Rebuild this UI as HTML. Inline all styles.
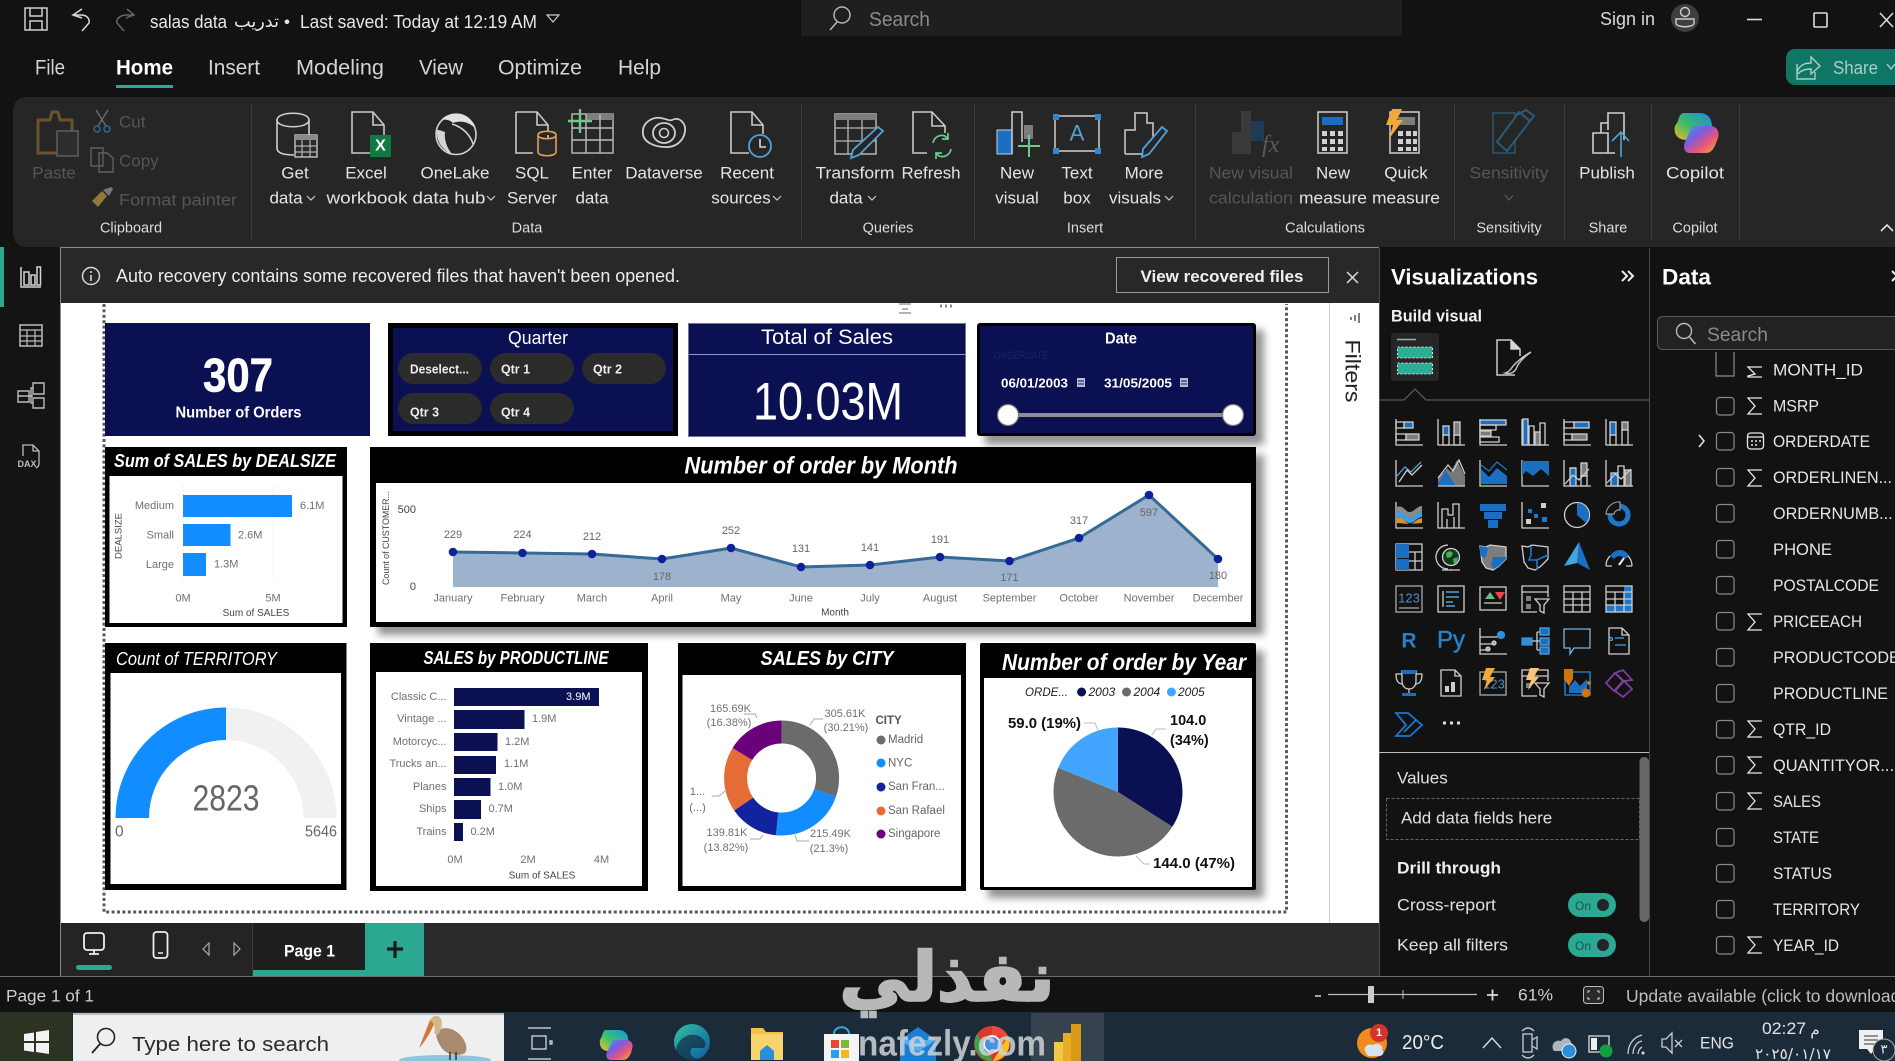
<!DOCTYPE html>
<html lang="en"><head><meta charset="utf-8"><title>Power BI Desktop</title>
<style>
html,body{margin:0;padding:0;background:#121212;width:1895px;height:1061px;overflow:hidden}
svg{display:block;position:absolute;left:0;top:0}
text{font-family:"Liberation Sans","DejaVu Sans",sans-serif;dominant-baseline:central;fill:#e8e8e8}
.m{text-anchor:middle}.e{text-anchor:end}.b{font-weight:700}.i{font-style:italic}
.tab{font-size:21px;fill:#d4d4d4}
.rb{font-size:17px;fill:#e4e4e4;text-anchor:middle}
.rd{font-size:17px;fill:#565656;text-anchor:middle}
.gr{font-size:14.5px;fill:#dcdcdc;text-anchor:middle}
.ax{font-size:11px;fill:#707070}
.dl{font-size:11px;fill:#666}
.f{font-size:16.2px;fill:#e6e6e6}
.v{font-size:17px;fill:#e0e0e0}
.ic{fill:none;stroke:#cfcfcf;stroke-width:1.4}
.bl{fill:#1b6fc2}.gy{fill:#7d7d7d}
.sb{fill:none;stroke:#1b78cc;stroke-width:1.6}
.cb{fill:none;stroke:#8a8a8a;stroke-width:1.2}
</style></head><body>
<svg width="1895" height="1061" viewBox="0 0 1895 1061" xmlns="http://www.w3.org/2000/svg">
<defs>
<filter id="bl" x="-20%" y="-20%" width="140%" height="140%"><feGaussianBlur stdDeviation="4"/></filter>
<linearGradient id="cop" x1="0" y1="0" x2="1" y2="1"><stop offset="0" stop-color="#2aa9f0"/><stop offset=".35" stop-color="#7b5be0"/><stop offset=".65" stop-color="#e8567a"/><stop offset="1" stop-color="#f3b02f"/></linearGradient>
<linearGradient id="cop2" x1="0" y1="1" x2="1" y2="0"><stop offset="0" stop-color="#f6c22a"/><stop offset=".45" stop-color="#3dc46a"/><stop offset="1" stop-color="#1a8fe8"/></linearGradient>
<linearGradient id="edge" x1="0" y1="0" x2="1" y2="1"><stop offset="0" stop-color="#35c1a0"/><stop offset="1" stop-color="#0c59a4"/></linearGradient>
</defs>
<rect width="1895" height="1061" fill="#121212"/>

<!-- title bar -->
<g class="ic" stroke="#d0d0d0">
<path d="M25 8h22v22H25zM30 8v8h12V8M30 30v-9h12v9" fill="none" stroke="#d0d0d0" stroke-width="1.500"/>
<path d="M82 9l-9 6 9 3M73 15h8c6 0 9 4 8 8l-7 8" fill="none" stroke="#d8d8d8" stroke-width="1.500"/>
<path d="M127 9l7 6-8 3M134 15h-7c-7 0-11 4-10 8l7 8" fill="none" stroke="#666" stroke-width="1.500"/>
</g>
<text x="150" y="22" font-size="18" textLength="77" lengthAdjust="spacingAndGlyphs">salas data</text>
<text x="234" y="22" font-size="17" textLength="45" lengthAdjust="spacingAndGlyphs" style="font-family:'DejaVu Sans',sans-serif">تدريب</text>
<text x="287" y="22" font-size="17" class="m">•</text>
<text x="300" y="22" font-size="18" textLength="237" lengthAdjust="spacingAndGlyphs">Last saved: Today at 12:19 AM</text>
<path d="M547 15h12l-6 7z" fill="none" stroke="#ccc" stroke-width="1.200"/>
<rect x="801" width="601" height="36" fill="#1f1f1f"/>
<circle cx="842" cy="15" r="8" fill="none" stroke="#b5b5b5" stroke-width="1.500"/><path d="M837 22l-7 8" stroke="#b5b5b5" stroke-width="1.600"/>
<text x="869" y="20" font-size="20" style="fill:#8a8a8a" textLength="61" lengthAdjust="spacingAndGlyphs">Search</text>
<text x="1600" y="19" font-size="18" style="fill:#d8d8d8" textLength="55" lengthAdjust="spacingAndGlyphs">Sign in</text>
<circle cx="1685" cy="18" r="14" fill="#3e3e3e"/><circle cx="1685" cy="12" r="4.500" fill="none" stroke="#ccc" stroke-width="1.400"/><path d="M1676 19h18v4c0 5-18 5-18 0z" fill="none" stroke="#ccc" stroke-width="1.400"/>
<path d="M1747 19.500h15" stroke="#ddd" stroke-width="1.600"/>
<rect x="1814" y="13" width="13" height="14" fill="none" stroke="#ddd" stroke-width="1.600" rx="1"/>
<path d="M1880 13l13 14M1893 13l-13 14" stroke="#ddd" stroke-width="1.500"/>

<!-- tabs -->
<text x="35" y="68" class="tab" textLength="30" lengthAdjust="spacingAndGlyphs">File</text>
<text x="116" y="68" class="tab" style="fill:#fff;font-weight:700" textLength="57" lengthAdjust="spacingAndGlyphs">Home</text>
<rect x="116" y="85" width="57" height="3" fill="#2ba892"/>
<text x="208" y="68" class="tab" textLength="52" lengthAdjust="spacingAndGlyphs">Insert</text>
<text x="296" y="68" class="tab" textLength="88" lengthAdjust="spacingAndGlyphs">Modeling</text>
<text x="419" y="68" class="tab" textLength="44" lengthAdjust="spacingAndGlyphs">View</text>
<text x="498" y="68" class="tab" textLength="84" lengthAdjust="spacingAndGlyphs">Optimize</text>
<text x="618" y="68" class="tab" textLength="43" lengthAdjust="spacingAndGlyphs">Help</text>
<path d="M1795 49h100v36h-100a9 9 0 0 1-9-9V58a9 9 0 0 1 9-9z" fill="#0f7564"/>
<path d="M1797 64v15h18v-7M1797 72c3-8 9-9 14-9V57l9 9-9 8v-5c-5 0-10 1-13 5" fill="none" stroke="#a9cfc8" stroke-width="1.400"/>
<text x="1833" y="68" font-size="18" style="fill:#a9cfc8" textLength="45" lengthAdjust="spacingAndGlyphs">Share</text>
<path d="M1887 64l4 5 4-5" fill="none" stroke="#a9cfc8" stroke-width="1.400"/>

<!-- ribbon -->
<path d="M26 97H1895V247H26a13 13 0 0 1-13-13V110a13 13 0 0 1 13-13z" fill="#262626"/>
<g stroke="#3a3a3a" stroke-width="1">
<path d="M251.500 104V240M801.500 104V240M974.500 104V240M1195.500 104V240M1454.500 104V240M1564.500 104V240M1651.500 104V240M1739.500 104V240"/>
</g>
<g id="ribbonicons">
<!-- paste -->
<path d="M38 120h12l2-8h6l2 8h12v33H38z" fill="none" stroke="#6a5232" stroke-width="3"/>
<rect x="57" y="131" width="21" height="25" fill="#2d2d2d" stroke="#5a5a5a" stroke-width="1.600"/>
<path d="M96 110l10 16M108 110l-10 16" stroke="#6c6c6c" stroke-width="1.400"/><circle cx="97" cy="129" r="3" fill="none" stroke="#2f6a96" stroke-width="1.500"/><circle cx="107" cy="129" r="3" fill="none" stroke="#2f6a96" stroke-width="1.500"/>
<path d="M91 148h12v18H91zM99 153h8l6 5v14H99z" fill="none" stroke="#606060" stroke-width="1.400"/>
<path d="M92 201l10-10 5 5-9 11z" fill="#8d7a3c"/><path d="M103 190l8-3 2 2-4 7z" fill="#777"/>
<!-- get data -->
<path d="M277 120c0-9 32-9 32 0v22M277 120c0 9 32 9 32 0M277 120v28c0 6 10 7 17 7" fill="none" stroke="#cfcfcf" stroke-width="1.600"/>
<rect x="295" y="135" width="22" height="22" fill="#2a2a2a" stroke="#cfcfcf" stroke-width="1.300"/><rect x="295" y="135" width="22" height="5" fill="#8a8a8a"/><path d="M295 146h22M295 152h22M302 140v17M310 140v17" stroke="#cfcfcf"/>
<!-- excel -->
<path d="M352 112h21l11 13v28h-32zM373 112v13h11" fill="none" stroke="#c9c9c9" stroke-width="1.600"/>
<rect x="370" y="135" width="21" height="22" fill="#107a43"/><text x="380.500" y="146" class="m b" font-size="16" style="fill:#fff">X</text>
<!-- onelake -->
<circle cx="456" cy="134.500" r="20" fill="#262626" stroke="#d0d0d0" stroke-width="1.600"/>
<path d="M441 120c7-8 20-9 28-2 3 3 5 6 6 10-6-6-15-8-22-5-3-3-7-4-12-3z" fill="#e2e2e2"/><path d="M437 130c-1 11 5 20 15 24-5-6-8-14-7-22-3-1-5-2-8-2z" fill="#d4d4d4"/>
<path d="M452 124c10 3 18 10 21 20" fill="none" stroke="#d0d0d0" stroke-width="1.600"/>
<!-- SQL -->
<path d="M516 112h21l11 13v13M537 112v13h11M533 153h-17v-41" fill="none" stroke="#c9c9c9" stroke-width="1.600"/>
<path d="M538 135c0-5 18-5 18 0v17c0 5-18 5-18 0zM538 135c0 5 18 5 18 0" fill="#2a2a2a" stroke="#e0a05a" stroke-width="1.600"/>
<!-- enter data -->
<rect x="572" y="114" width="41" height="39" fill="none" stroke="#bdbdbd" stroke-width="1.400"/><rect x="586" y="113" width="27" height="7" fill="#7d7d7d"/>
<path d="M572 128h41M572 140h41M586 114v39M600 114v39" stroke="#bdbdbd" stroke-width="1.400"/>
<path d="M580 109v24M568 121h24" stroke="#6ecb8a" stroke-width="2.400"/>
<!-- dataverse -->
<path d="M650 120c10-6 18 2 22 0 8-4 14 4 13 11-1 10-10 17-20 16-9 0-21-4-22-13-1-7 2-11 7-14z" fill="none" stroke="#cfcfcf" stroke-width="1.800"/>
<ellipse cx="664" cy="133" rx="11" ry="10" fill="none" stroke="#cfcfcf" stroke-width="1.800"/><circle cx="664" cy="133" r="4.500" fill="none" stroke="#cfcfcf" stroke-width="1.600"/>
<!-- recent -->
<path d="M749 153h-18v-41h21l11 13v9M752 112v13h11" fill="none" stroke="#c9c9c9" stroke-width="1.600"/>
<circle cx="760" cy="146" r="11" fill="#262626" stroke="#4fa3d8" stroke-width="1.800"/><path d="M760 139v8h6" fill="none" stroke="#d8d8d8" stroke-width="1.600"/>
<!-- transform -->
<rect x="835" y="114" width="41" height="40" fill="none" stroke="#b5b5b5" stroke-width="1.500"/><rect x="835" y="114" width="41" height="6" fill="#7d7d7d"/><path d="M835 128h41M835 141h41M848 120v34M862 120v34" stroke="#b5b5b5" stroke-width="1.300"/>
<path d="M878 127l5 4-24 24-8 3 2-8z" fill="#262626" stroke="#4fa3d8" stroke-width="1.800"/>
<!-- refresh -->
<path d="M927 153h-14v-41h19l13 14v7M932 112v14h13" fill="none" stroke="#c9c9c9" stroke-width="1.600"/>
<path d="M933 143c1-6 7-9 12-7l3 3M951 149c-1 6-7 9-12 7l-3-3M948 133v6h-6M936 159v-6h6" fill="none" stroke="#6ecb8a" stroke-width="1.700"/>
<!-- new visual -->
<rect x="997" y="130" width="15" height="24" fill="#1b6fc2" stroke="#cfcfcf"/><path d="M1012 154v-42h10v30" fill="none" stroke="#cfcfcf" stroke-width="1.500"/><rect x="1024" y="125" width="9" height="14" fill="#7d7d7d"/>
<path d="M1029 135v22M1018 146h22" stroke="#6ecb8a" stroke-width="2"/>
<!-- text box -->
<rect x="1055" y="116" width="44" height="35" fill="none" stroke="#cfcfcf" stroke-width="1.500"/>
<path d="M1053 114h6v6h-6zM1095 114h6v6h-6zM1053 148h6v6h-6zM1095 148h6v6h-6z" fill="#2f88cf"/>
<text x="1077" y="133" class="m" font-size="22" style="fill:#4fa3d8">A</text>
<!-- more visuals -->
<path d="M1125 154v-24h10v-17h12v10h6v18M1125 154h22" fill="none" stroke="#cfcfcf" stroke-width="1.500"/>
<path d="M1162 127l5 4-18 23-7 3 1-8z" fill="#262626" stroke="#4fa3d8" stroke-width="1.800"/>
<!-- new visual calc -->
<path d="M1232 154v-22h9v-21h10v43z" fill="#3a3a3a"/><rect x="1251" y="121" width="13" height="20" fill="#1f3a54"/>
<text x="1262" y="145" class="i" font-size="24" style="fill:#5a5a5a;font-family:'Liberation Serif',serif">fx</text>
<!-- new measure -->
<rect x="1318" y="112" width="29" height="41" fill="none" stroke="#cfcfcf" stroke-width="1.500"/><rect x="1322" y="117" width="21" height="8" fill="#1b6fc2"/>
<path d="M1322 131h5v5h-5zM1330 131h5v5h-5zM1338 131h5v5h-5zM1322 139h5v5h-5zM1330 139h5v5h-5zM1338 139h5v5h-5zM1322 147h5v4h-5zM1330 147h5v4h-5zM1338 147h5v4h-5z" fill="#d0d0d0"/>
<!-- quick measure -->
<rect x="1390" y="112" width="29" height="41" fill="none" stroke="#cfcfcf" stroke-width="1.500"/><rect x="1398" y="117" width="17" height="8" fill="#7d7d7d"/>
<path d="M1398 131h5v5h-5zM1406 131h5v5h-5zM1398 139h5v5h-5zM1406 139h5v5h-5zM1398 147h5v4h-5zM1406 147h5v4h-5zM1413 131h4v5h-4zM1413 139h4v5h-4zM1413 147h4v4h-4z" fill="#d0d0d0"/>
<path d="M1392 109h10l-5 11h6l-14 19 4-14h-7z" fill="#f2a83b"/>
<!-- sensitivity -->
<path d="M1493 113h22v40h-22z" fill="none" stroke="#2a4a5c" stroke-width="2"/><path d="M1497 142l22-30 11 9-23 30z" fill="#262626" stroke="#2f5a74" stroke-width="2"/><path d="M1517 115l9-5 8 6-6 7" fill="none" stroke="#2f5a74" stroke-width="2"/>
<!-- publish -->
<path d="M1608 130v-17h16v27M1593 153v-20h15v20zM1608 123h-7v10M1593 153h22" fill="none" stroke="#cfcfcf" stroke-width="1.600"/>
<path d="M1621 157v-24M1612 141l9-9 8 9" fill="none" stroke="#4fa3d8" stroke-width="1.600"/>
<!-- copilot -->
<path d="M1684 113h16c8 0 12 6 12 14l-4 13h-22c-8 0-13-6-11-14l3-5c1-5 3-8 6-8z" fill="url(#cop2)" opacity=".95"/>
<path d="M1692 126h18c7 0 10 6 8 12l-2 5c-2 6-5 10-10 10h-16c-6 0-7-6-5-11z" fill="url(#cop)"/>
</g>
<text x="54" y="173" class="rd">Paste</text>
<text x="119" y="122" font-size="17" style="fill:#565656">Cut</text>
<text x="119" y="161" font-size="17" style="fill:#565656">Copy</text>
<text x="119" y="200" font-size="17" style="fill:#565656" textLength="118" lengthAdjust="spacingAndGlyphs">Format painter</text>
<g id="ribbonlabels">
<text x="295" y="173" class="rb">Get</text><text x="286" y="198" class="rb">data</text><path d="M307 196l4 4 4-4" fill="none" stroke="#ccc" stroke-width="1.200"/>
<text x="366" y="173" class="rb">Excel</text><text x="367" y="198" class="rb" textLength="81" lengthAdjust="spacingAndGlyphs">workbook</text>
<text x="455" y="173" class="rb">OneLake</text><text x="449" y="198" class="rb" textLength="73" lengthAdjust="spacingAndGlyphs">data hub</text><path d="M487 196l4 4 4-4" fill="none" stroke="#ccc" stroke-width="1.200"/>
<text x="532" y="173" class="rb">SQL</text><text x="532" y="198" class="rb">Server</text>
<text x="592" y="173" class="rb">Enter</text><text x="592" y="198" class="rb">data</text>
<text x="664" y="173" class="rb">Dataverse</text>
<text x="747" y="173" class="rb">Recent</text><text x="741" y="198" class="rb">sources</text><path d="M773 196l4 4 4-4" fill="none" stroke="#ccc" stroke-width="1.200"/>
<text x="855" y="173" class="rb" textLength="79" lengthAdjust="spacingAndGlyphs">Transform</text><text x="846" y="198" class="rb">data</text><path d="M868 196l4 4 4-4" fill="none" stroke="#ccc" stroke-width="1.200"/>
<text x="931" y="173" class="rb" textLength="59" lengthAdjust="spacingAndGlyphs">Refresh</text>
<text x="1017" y="173" class="rb">New</text><text x="1017" y="198" class="rb">visual</text>
<text x="1077" y="173" class="rb">Text</text><text x="1077" y="198" class="rb">box</text>
<text x="1144" y="173" class="rb">More</text><text x="1135" y="198" class="rb">visuals</text><path d="M1165 196l4 4 4-4" fill="none" stroke="#ccc" stroke-width="1.200"/>
<text x="1251" y="173" class="rd" textLength="84" lengthAdjust="spacingAndGlyphs">New visual</text><text x="1251" y="198" class="rd" textLength="84" lengthAdjust="spacingAndGlyphs">calculation</text>
<text x="1333" y="173" class="rb">New</text><text x="1333" y="198" class="rb" textLength="68" lengthAdjust="spacingAndGlyphs">measure</text>
<text x="1406" y="173" class="rb">Quick</text><text x="1406" y="198" class="rb" textLength="68" lengthAdjust="spacingAndGlyphs">measure</text>
<text x="1509" y="173" class="rd" textLength="79" lengthAdjust="spacingAndGlyphs">Sensitivity</text><path d="M1505 195l4 5 4-5" fill="none" stroke="#5c5c5c" stroke-width="1.200"/>
<text x="1607" y="173" class="rb">Publish</text>
<text x="1695" y="173" class="rb" textLength="58" lengthAdjust="spacingAndGlyphs">Copilot</text>
</g>
<text x="131" y="228.500" class="gr">Clipboard</text><text x="527" y="228.500" class="gr">Data</text><text x="888" y="228.500" class="gr">Queries</text><text x="1085" y="228.500" class="gr">Insert</text><text x="1325" y="228.500" class="gr" textLength="80" lengthAdjust="spacingAndGlyphs">Calculations</text><text x="1509" y="228.500" class="gr">Sensitivity</text><text x="1608" y="228.500" class="gr">Share</text><text x="1695" y="228.500" class="gr">Copilot</text>
<path d="M1881 231l6-6 6 6" fill="none" stroke="#ddd" stroke-width="1.600"/>

<!-- left rail -->
<rect x="0" y="247" width="60" height="730" fill="#141414"/>
<rect x="0" y="247" width="4" height="60" fill="#2ba892"/>
<path d="M21 267v20h20" fill="none" stroke="#d4d4d4" stroke-width="1.500"/><path d="M24 272h5v13h-5zM31 275h4v10h-4zM37 267h3.500v18H37z" fill="none" stroke="#d4d4d4" stroke-width="1.500"/>
<rect x="20" y="325" width="22" height="21" fill="none" stroke="#bcbcbc" stroke-width="1.500"/><path d="M20 330h22M20 336h22M20 341h22M27 330v16M35 330v16" stroke="#bcbcbc" stroke-width="1.200"/>
<path d="M33 383h11v11H33zM18 391h11v11H18zM33 398h11v10H33zM29 396h4M33 388h-2v15h2M18 396h11" fill="none" stroke="#bcbcbc" stroke-width="1.400"/>
<path d="M23 456v-11h10l6 6v12c0 3-1 4-3 5M33 445v6h6" fill="none" stroke="#bcbcbc" stroke-width="1.300"/>
<text x="27" y="464" class="m b" font-size="9" style="fill:#bcbcbc">DAX</text>

<!-- notif bar -->
<rect x="61" y="247" width="1318" height="56" fill="#282828"/>
<path d="M60.500 247V977M60.500 247.500H1379" stroke="#8a8a8a" stroke-width="1"/>
<circle cx="91" cy="276" r="8.500" fill="none" stroke="#d6d6d6" stroke-width="1.500"/><path d="M91 275v6M91 271v2" stroke="#d6d6d6" stroke-width="1.600"/>
<text x="116" y="276" font-size="18" style="fill:#ececec" textLength="564" lengthAdjust="spacingAndGlyphs">Auto recovery contains some recovered files that haven't been opened.</text>
<rect x="1116.500" y="257.500" width="212" height="35" fill="none" stroke="#9a9a9a"/>
<text x="1222" y="276.500" class="m b" font-size="17" style="fill:#f0f0f0" textLength="163" lengthAdjust="spacingAndGlyphs">View recovered files</text>
<path d="M1347 272l11 11M1358 272l-11 11" stroke="#ddd" stroke-width="1.500"/>

<!-- canvas -->
<rect x="61" y="303" width="1318" height="620" fill="#fff"/>
<path d="M1329.500 303V923" stroke="#cfcfcf"/>
<path d="M1359 313v10M1355 315v6M1351 317v3" stroke="#555" stroke-width="1.500"/>
<text transform="translate(1352 371) rotate(90)" class="m" font-size="21" style="fill:#222" textLength="63" lengthAdjust="spacingAndGlyphs">Filters</text>
<path d="M899 304h12M902 309h6M899 313h12" stroke="#888" stroke-width="1.300"/>
<path d="M940 306h2M945 306h2M950 306h2" stroke="#888" stroke-width="3"/>
<path d="M104 304V912H1286.500V304" fill="none" stroke="#5a5a5a" stroke-width="3" stroke-dasharray="3 2.400"/>

<!-- shadows -->
<rect x="985" y="330" width="279" height="115" fill="#666" filter="url(#bl)" opacity=".7"/>
<rect x="378" y="455" width="886" height="180" fill="#666" filter="url(#bl)" opacity=".7"/>
<rect x="988" y="651" width="276" height="247" fill="#666" filter="url(#bl)" opacity=".7"/>

<!-- KPI cards -->
<rect x="105" y="323" width="265" height="113" fill="#0a1052"/>
<text x="238" y="375" class="m b" font-size="47" style="fill:#fff;stroke:#fff;stroke-width:.6" textLength="70" lengthAdjust="spacingAndGlyphs">307</text>
<text x="238.500" y="413" class="m b" font-size="15.500" style="fill:#fff" textLength="126" lengthAdjust="spacingAndGlyphs">Number of Orders</text>

<rect x="388" y="323" width="290" height="113" fill="#000"/><rect x="393" y="328" width="280" height="103" fill="#0a1052"/>
<text x="538" y="338" class="m" font-size="18" style="fill:#fff" textLength="60" lengthAdjust="spacingAndGlyphs">Quarter</text>
<rect x="398" y="353" width="84" height="31" rx="15.500" fill="#2b2b2b"/><rect x="490" y="353" width="84" height="31" rx="15.500" fill="#2b2b2b"/><rect x="582" y="353" width="84" height="31" rx="15.500" fill="#2b2b2b"/><rect x="398" y="393" width="84" height="31" rx="15.500" fill="#2b2b2b"/><rect x="490" y="393" width="84" height="31" rx="15.500" fill="#2b2b2b"/>
<text x="410" y="369" class="b" font-size="13" style="fill:#eee" textLength="59" lengthAdjust="spacingAndGlyphs">Deselect...</text>
<text x="501" y="369" class="b" font-size="13" style="fill:#eee" textLength="29" lengthAdjust="spacingAndGlyphs">Qtr 1</text>
<text x="593" y="369" class="b" font-size="13" style="fill:#eee" textLength="29" lengthAdjust="spacingAndGlyphs">Qtr 2</text>
<text x="410" y="412" class="b" font-size="13" style="fill:#eee" textLength="29" lengthAdjust="spacingAndGlyphs">Qtr 3</text>
<text x="501" y="412" class="b" font-size="13" style="fill:#eee" textLength="29" lengthAdjust="spacingAndGlyphs">Qtr 4</text>

<rect x="688.500" y="323.500" width="277" height="113" fill="#0a1052" stroke="#70748f"/>
<path d="M689 354.500H965" stroke="#9096c8"/>
<text x="827" y="337.500" class="m" font-size="21" style="fill:#fff" textLength="132" lengthAdjust="spacingAndGlyphs">Total of Sales</text>
<text x="828" y="402" class="m" font-size="53" style="fill:#fff" textLength="150" lengthAdjust="spacingAndGlyphs">10.03M</text>

<rect x="977" y="323" width="279" height="113" rx="3" fill="#000"/><rect x="980" y="326" width="273" height="107" fill="#0a1052"/>
<text x="1121" y="339" class="m b" font-size="16" style="fill:#fff" textLength="32" lengthAdjust="spacingAndGlyphs">Date</text>
<text x="994" y="356" font-size="11" style="fill:#1b2163" textLength="54" lengthAdjust="spacingAndGlyphs">ORDERDATE</text>
<text x="1001" y="383" class="b" font-size="13" style="fill:#fff" textLength="67" lengthAdjust="spacingAndGlyphs">06/01/2003</text>
<rect x="1077" y="378" width="8" height="9" fill="#b9bfd8"/><path d="M1078 381h6M1078 384h6" stroke="#0a1052"/>
<text x="1104" y="383" class="b" font-size="13" style="fill:#fff" textLength="68" lengthAdjust="spacingAndGlyphs">31/05/2005</text>
<rect x="1180" y="378" width="8" height="9" fill="#b9bfd8"/><path d="M1181 381h6M1181 384h6" stroke="#0a1052"/>
<path d="M1009 415H1233" stroke="#8f8f8f" stroke-width="4"/>
<circle cx="1008" cy="415" r="10.500" fill="#fff" stroke="#777" stroke-width="1.200"/><circle cx="1233" cy="415" r="10.500" fill="#fff" stroke="#777" stroke-width="1.200"/>

<!-- dealsize -->
<rect x="105" y="447" width="242" height="180" fill="#000"/><rect x="109.500" y="476" width="233" height="147" fill="#fff"/>
<text x="114" y="461" class="b i" font-size="18" style="fill:#fff" textLength="222" lengthAdjust="spacingAndGlyphs">Sum of SALES by DEALSIZE</text>
<path d="M183.500 486V582M273.500 486V582" stroke="#ddd" stroke-dasharray="1 3"/>
<rect x="183" y="495" width="109" height="22" fill="#118dff"/><rect x="183" y="524" width="47.500" height="22" fill="#118dff"/><rect x="183" y="553" width="23" height="23" fill="#118dff"/>
<text x="174" y="506" class="ax e">Medium</text><text x="174" y="535.500" class="ax e">Small</text><text x="174" y="565" class="ax e">Large</text>
<text x="300" y="506" class="ax">6.1M</text><text x="238" y="535.500" class="ax">2.6M</text><text x="214" y="564.500" class="ax">1.3M</text>
<text x="183" y="598.500" class="ax m">0M</text><text x="273" y="598.500" class="ax m">5M</text><text x="256" y="613.500" class="ax m" style="font-size:10px;fill:#444">Sum of SALES</text>
<text transform="translate(119 536) rotate(-90)" class="m" font-size="9.500" style="fill:#444">DEALSIZE</text>

<!-- month -->
<rect x="370" y="447" width="886" height="180" fill="#000"/><rect x="376" y="483" width="875" height="139" fill="#fff"/>
<text x="821" y="466" class="m b i" font-size="24" style="fill:#fff" textLength="273" lengthAdjust="spacingAndGlyphs">Number of order by Month</text>
<polygon points="453,552 522.500,553 592,554 662,559 731,548 801,567 870,565 940,557 1009.500,561 1079,538 1149,495 1218,559 1218,587 453,587" fill="#9db3cd"/>
<polyline points="453,552 522.500,553 592,554 662,559 731,548 801,567 870,565 940,557 1009.500,561 1079,538 1149,495 1218,559" fill="none" stroke="#356a96" stroke-width="3"/>
<g fill="#10209b"><circle cx="453" cy="552" r="4.300"/><circle cx="522.500" cy="553" r="4.300"/><circle cx="592" cy="554" r="4.300"/><circle cx="662" cy="559" r="4.300"/><circle cx="731" cy="548" r="4.300"/><circle cx="801" cy="567" r="4.300"/><circle cx="870" cy="565" r="4.300"/><circle cx="940" cy="557" r="4.300"/><circle cx="1009.500" cy="561" r="4.300"/><circle cx="1079" cy="538" r="4.300"/><circle cx="1149" cy="495" r="4.300"/><circle cx="1218" cy="559" r="4.300"/></g>
<text x="453" y="535" class="dl m">229</text><text x="522.500" y="535" class="dl m">224</text><text x="592" y="537" class="dl m">212</text><text x="662" y="577" class="dl m">178</text><text x="731" y="531" class="dl m">252</text><text x="801" y="549" class="dl m">131</text><text x="870" y="548" class="dl m">141</text><text x="940" y="540" class="dl m">191</text><text x="1009.500" y="578" class="dl m">171</text><text x="1079" y="521" class="dl m">317</text><text x="1149" y="513" class="dl m">597</text><text x="1218" y="576" class="dl m">180</text>
<text x="453" y="598.500" class="ax m">January</text><text x="522.500" y="598.500" class="ax m">February</text><text x="592" y="598.500" class="ax m">March</text><text x="662" y="598.500" class="ax m">April</text><text x="731" y="598.500" class="ax m">May</text><text x="801" y="598.500" class="ax m">June</text><text x="870" y="598.500" class="ax m">July</text><text x="940" y="598.500" class="ax m">August</text><text x="1009.500" y="598.500" class="ax m">September</text><text x="1079" y="598.500" class="ax m">October</text><text x="1149" y="598.500" class="ax m">November</text><text x="1218" y="598.500" class="ax m">December</text>
<text x="835" y="613" class="m" font-size="10" style="fill:#444">Month</text>
<text x="416" y="510" class="e" font-size="11" style="fill:#444">500</text><text x="416" y="587" class="e" font-size="11" style="fill:#444">0</text>
<text transform="translate(386 538) rotate(-90)" class="m" font-size="9" style="fill:#444" textLength="94" lengthAdjust="spacingAndGlyphs">Count of CUSTOMER...</text>

<!-- territory -->
<rect x="105" y="643" width="241.500" height="247" fill="#000"/><rect x="110.500" y="673" width="230.500" height="211" fill="#fff"/>
<text x="116" y="659" class="i" font-size="18" style="fill:#fff" textLength="161" lengthAdjust="spacingAndGlyphs">Count of TERRITORY</text>
<path d="M115.500 818A110.500 110.500 0 0 1 226 707.500V740A77 78 0 0 0 149 818Z" fill="#118dff"/>
<path d="M226 707.500A110.500 110.500 0 0 1 336.500 818H303.500A77.500 78 0 0 0 226 740Z" fill="#f1f1f1"/>
<text x="226" y="798" class="m" font-size="36" style="fill:#666" textLength="67" lengthAdjust="spacingAndGlyphs">2823</text>
<text x="115" y="832" font-size="15.500" style="fill:#666">0</text><text x="337" y="832" class="e" font-size="15.500" style="fill:#666" textLength="32" lengthAdjust="spacingAndGlyphs">5646</text>

<!-- productline -->
<rect x="370" y="643" width="278" height="248" fill="#000"/><rect x="376" y="672" width="266" height="214" fill="#fff"/>
<text x="516" y="658" class="m b i" font-size="18" style="fill:#fff" textLength="185" lengthAdjust="spacingAndGlyphs">SALES by PRODUCTLINE</text>
<g fill="#0a1052"><rect x="454" y="688" width="145" height="18"/><rect x="454" y="710" width="70.500" height="19"/><rect x="454" y="733" width="43.500" height="18"/><rect x="454" y="756" width="42" height="18"/><rect x="454" y="778" width="36.500" height="18"/><rect x="454" y="800" width="27" height="19"/><rect x="454" y="823" width="9" height="18"/></g>
<text x="446.500" y="697" class="ax e">Classic C...</text><text x="446.500" y="719" class="ax e">Vintage ...</text><text x="446.500" y="742" class="ax e">Motorcyc...</text><text x="446.500" y="764" class="ax e">Trucks an...</text><text x="446.500" y="787" class="ax e">Planes</text><text x="446.500" y="809" class="ax e">Ships</text><text x="446.500" y="832" class="ax e">Trains</text>
<text x="590.500" y="697" class="ax e" style="fill:#fff">3.9M</text><text x="532" y="719" class="ax">1.9M</text><text x="505" y="742" class="ax">1.2M</text><text x="504" y="764" class="ax">1.1M</text><text x="498" y="787" class="ax">1.0M</text><text x="488.500" y="809" class="ax">0.7M</text><text x="470.500" y="832" class="ax">0.2M</text>
<text x="455" y="860" class="ax m">0M</text><text x="528" y="860" class="ax m">2M</text><text x="601.500" y="860" class="ax m">4M</text>
<text x="542" y="876" class="m" font-size="10" style="fill:#444">Sum of SALES</text>

<!-- city -->
<rect x="678" y="643" width="288" height="248" fill="#000"/><rect x="682.500" y="675" width="278.500" height="211" fill="#fff"/>
<text x="827" y="659" class="m b i" font-size="20" style="fill:#fff" textLength="133" lengthAdjust="spacingAndGlyphs">SALES by CITY</text>
<g transform="rotate(-90 781.600 778)" fill="none" stroke-width="23">
<circle cx="781.600" cy="778" r="46" stroke="#6b6b6b" stroke-dasharray="87.320 201.710"/>
<circle cx="781.600" cy="778" r="46" stroke="#118dff" stroke-dasharray="61.560 227.470" stroke-dashoffset="-87.320"/>
<circle cx="781.600" cy="778" r="46" stroke="#12239e" stroke-dasharray="39.940 249.090" stroke-dashoffset="-148.880"/>
<circle cx="781.600" cy="778" r="46" stroke="#e66c37" stroke-dasharray="52.860 236.170" stroke-dashoffset="-188.820"/>
<circle cx="781.600" cy="778" r="46" stroke="#6b007b" stroke-dasharray="47.340 241.690" stroke-dashoffset="-241.680"/>
</g>
<path d="M757 718l-2-4h-11M810 725l4-6h9M725 791l-6 5h-7M763 835l-3 4h-10M795 835l2 6h12" fill="none" stroke="#aaa"/>
<text x="730.500" y="709" class="ax m">165.69K</text><text x="729" y="723" class="ax m">(16.38%)</text>
<text x="845" y="714" class="ax m">305.61K</text><text x="846" y="728" class="ax m">(30.21%)</text>
<text x="697.500" y="792" class="ax m">1...</text><text x="697.500" y="808" class="ax m">(...)</text>
<text x="727" y="833" class="ax m">139.81K</text><text x="726" y="848" class="ax m">(13.82%)</text>
<text x="830.500" y="834" class="ax m">215.49K</text><text x="829" y="849" class="ax m">(21.3%)</text>
<text x="875.500" y="721" class="b" font-size="11.500" style="fill:#555">CITY</text>
<circle cx="881" cy="740" r="4.500" fill="#6b6b6b"/><circle cx="881" cy="763" r="4.500" fill="#118dff"/><circle cx="881" cy="787" r="4.500" fill="#12239e"/><circle cx="881" cy="811" r="4.500" fill="#e66c37"/><circle cx="881" cy="834" r="4.500" fill="#6b007b"/>
<text x="888" y="740" font-size="11.500" style="fill:#666">Madrid</text><text x="888" y="763.500" font-size="11.500" style="fill:#666">NYC</text><text x="888" y="787" font-size="11.500" style="fill:#666">San Fran...</text><text x="888" y="811" font-size="11.500" style="fill:#666">San Rafael</text><text x="888" y="834" font-size="11.500" style="fill:#666">Singapore</text>

<!-- year -->
<rect x="980" y="643" width="276" height="247" rx="2" fill="#000"/><rect x="984" y="678" width="268" height="209" fill="#fff"/>
<text x="1124" y="662" class="m b i" font-size="23" style="fill:#fff" textLength="244" lengthAdjust="spacingAndGlyphs">Number of order by Year</text>
<text x="1025" y="692" class="i" font-size="12" style="fill:#222" textLength="43" lengthAdjust="spacingAndGlyphs">ORDE...</text>
<circle cx="1081.600" cy="692" r="4.500" fill="#0a1052"/><text x="1088.500" y="692" class="i" font-size="12" style="fill:#222">2003</text>
<circle cx="1126.500" cy="692" r="4.500" fill="#6b6b6b"/><text x="1133.500" y="692" class="i" font-size="12" style="fill:#222">2004</text>
<circle cx="1171.400" cy="692" r="4.500" fill="#41a4ff"/><text x="1178" y="692" class="i" font-size="12" style="fill:#222">2005</text>
<g transform="rotate(-90 1118 792)" fill="none" stroke-width="64.500">
<circle cx="1118" cy="792" r="32.250" stroke="#0a1052" stroke-dasharray="68.900 133.740"/>
<circle cx="1118" cy="792" r="32.250" stroke="#6b6b6b" stroke-dasharray="95.230 107.410" stroke-dashoffset="-68.900"/>
<circle cx="1118" cy="792" r="32.250" stroke="#41a4ff" stroke-dasharray="38.500 164.140" stroke-dashoffset="-164.130"/>
</g>
<path d="M1152 735l4-6h10M1098 730l-3-7h-11M1136 856l8 8h6" fill="none" stroke="#bbb"/>
<text x="1170" y="721" class="b" font-size="14.500" style="fill:#111">104.0</text><text x="1170" y="741" class="b" font-size="14.500" style="fill:#111">(34%)</text>
<text x="1008" y="724" class="b" font-size="14.500" style="fill:#111" textLength="73" lengthAdjust="spacingAndGlyphs">59.0 (19%)</text>
<text x="1153" y="864" class="b" font-size="14.500" style="fill:#111" textLength="82" lengthAdjust="spacingAndGlyphs">144.0 (47%)</text>

<!-- page tabs -->
<rect x="61" y="923" width="1318" height="53" fill="#2a2a2a"/>
<rect x="61" y="923" width="191" height="53" fill="#242424"/><rect x="253" y="923" width="112" height="53" fill="#1f1f1f"/>
<path d="M252.500 923V976" stroke="#3c3c3c"/>
<rect x="84" y="933" width="20" height="17" rx="3" fill="none" stroke="#eee" stroke-width="1.800"/><path d="M89 954h10M94 950v4" stroke="#eee" stroke-width="1.800"/>
<rect x="76" y="965" width="36" height="5" rx="2.500" fill="#2ba892"/>
<rect x="153.500" y="932" width="14" height="26" rx="3" fill="none" stroke="#eee" stroke-width="1.800"/><path d="M158 953h5" stroke="#eee" stroke-width="1.500"/>
<path d="M209 943l-6 6 6 6zM234 943l6 6-6 6z" fill="none" stroke="#aaa" stroke-width="1.200"/>
<text x="284" y="951" class="b" font-size="17" style="fill:#fff" textLength="51" lengthAdjust="spacingAndGlyphs">Page 1</text>
<rect x="253" y="970" width="112" height="6" fill="#2ba892"/>
<rect x="365" y="923" width="59" height="54" fill="#2ba892"/>
<path d="M395 941v17M387 949h16" stroke="#1a1a1a" stroke-width="3.200"/>

<!-- visualizations panel -->
<rect x="1379" y="248" width="270" height="728" fill="#121212"/>
<path d="M1379.500 248V976M1649.500 248V976" stroke="#4a4a4a"/>
<text x="1391" y="277" class="b" font-size="22" style="fill:#fff" textLength="147" lengthAdjust="spacingAndGlyphs">Visualizations</text>
<path d="M1622 271l5 5-5 5M1628 271l5 5-5 5" fill="none" stroke="#eee" stroke-width="2"/>
<text x="1391" y="316" class="b" font-size="17" style="fill:#f2f2f2" textLength="91" lengthAdjust="spacingAndGlyphs">Build visual</text>
<rect x="1391" y="333" width="48" height="48" rx="3" fill="#262626"/>
<path d="M1397 339.500h19" stroke="#aaa" stroke-width="1.500"/>
<rect x="1397.500" y="347" width="35" height="11" fill="#2cae95" stroke="#ddd" stroke-dasharray="2 2"/><rect x="1397.500" y="363" width="35" height="11" fill="#2cae95" stroke="#ddd" stroke-dasharray="2 2"/>
<path d="M1515 375h-18v-35h14l9 9v7M1511 340v9h9" fill="none" stroke="#c9c9c9" stroke-width="1.500"/><path d="M1511 340h0l9 9h-9z" fill="#d8d8d8"/>
<path d="M1531 352c-7 5-13 11-15 17-3 5-8 5-11 4 5-1 6-5 9-8 6-6 11-10 17-13z" fill="none" stroke="#c9c9c9" stroke-width="1.400"/>
<path d="M1379 400H1404L1415 389L1426 400H1649" fill="none" stroke="#5a5a5a" stroke-width="1.300"/>

<g id="vizgrid" fill="none" stroke="#cfcfcf" stroke-width="1.300">
<g transform="translate(1409 432)"><path d="M-13-13V13H14"/><path d="M-13-10h8v6h-8zM-13 2h10v6h-10z"/><rect x="-5" y="-10" width="9" height="6" class="bl"/><rect x="-3" y="2" width="13" height="6" class="gy"/></g>
<g transform="translate(1451 432)"><path d="M-13-13V13H14"/><path d="M-8 3h6v10h-6zM3 3h6v10H3z"/><rect x="-8" y="-6" width="6" height="9" class="bl"/><rect x="3" y="-10" width="6" height="13" class="gy"/></g>
<g transform="translate(1493 432)"><path d="M-13-13V13H14"/><rect x="-13" y="-12" width="26" height="5" class="bl"/><path d="M-13-7h16v5h-16z"/><rect x="-13" y="-1" width="11" height="5" class="gy"/><path d="M-13 5h19v5h-19z"/></g>
<g transform="translate(1535 432)"><path d="M-13-13V13H14"/><rect x="-12" y="-13" width="5" height="26" class="bl"/><path d="M-6-6h5V13h-5zM5-9h5V13H5z"/><rect x="0" y="0" width="5" height="13" class="gy"/></g>
<g transform="translate(1577 432)"><path d="M-13-13V13H14"/><path d="M-13-10h10v6h-10zM-13 2h8v6h-8z"/><rect x="-3" y="-10" width="15" height="6" class="bl"/><rect x="-5" y="2" width="15" height="6" class="gy"/></g>
<g transform="translate(1619 432)"><path d="M-13-13V13H14"/><path d="M-9 3h6v10h-6zM3-3h6V13H3z"/><rect x="-9" y="-10" width="6" height="13" class="bl"/><rect x="3" y="-10" width="6" height="8" class="gy"/></g>

<g transform="translate(1409 473)"><path d="M-13-13V13H14"/><path d="M-13 4l9-10 6 5 10-10" stroke="#4fa3d8"/><path d="M-10 9L-2-3l5 5 10-10"/></g>
<g transform="translate(1451 473)"><path d="M-13 13V5l7-7 2-3 4 4 6-12 8 16v10z" fill="#777" stroke="none"/><path d="M-13 5L-3-8 2-2 8-13l6 14" stroke="#ccc"/><path d="M-13 13v-3L-5-2 5 13z" class="bl" stroke="none"/><path d="M-13 13H14"/></g>
<g transform="translate(1493 473)"><path d="M-13-13V13H14"/><path d="M-12-4l8 8 8-9 10 8v8H-12z" class="bl" stroke="none"/><path d="M-12-8l8 6 8-9 10 8" stroke="#1b78cc"/></g>
<g transform="translate(1535 473)"><path d="M-13-13V13H14"/><path d="M-13-12H14V3L6-4-2 3-9-2-13 3z" class="bl" stroke="none"/></g>
<g transform="translate(1577 473)"><path d="M-13-13V13H14"/><rect x="-7" y="-5" width="6" height="18" class="bl"/><path d="M-7-5h6"/><rect x="4" y="-10" width="6" height="13" class="gy"/><path d="M4 3h6v10H4z"/><path d="M-12 11l8-9 6 5 10-11"/></g>
<g transform="translate(1619 473)"><path d="M-13-13V13H14"/><rect x="-8" y="0" width="7" height="13" class="bl"/><path d="M-1-7h6V13h-6z"/><rect x="6" y="-3" width="6" height="16" class="gy"/><path d="M-12 10l8-9 6 5 10-10"/></g>

<g transform="translate(1409 515)"><path d="M-13-13V13H14"/><path d="M-12-8c6-3 9 6 13 5 4 0 7-6 12-6v6c-5 0-7 6-12 6s-8-7-13-5z" fill="#8a8a8a" stroke="none"/><path d="M-12-3c6-2 9 6 13 6s7-6 12-6v5c-5 0-7 6-12 6s-8-7-13-5z" fill="#3a9ee4" stroke="none"/><path d="M-12 3c6-2 9 6 13 6s7-6 12-6v5l-12 1-13-1z" fill="#e08e1e" stroke="none"/></g>
<g transform="translate(1451 515)"><path d="M-13-13V13H14"/><path d="M-9 13V-6h6v6h5v-11h6V13"/><path d="M-4 13V4M3 13V2" /></g>
<g transform="translate(1493 515)"><rect x="-13" y="-11" width="26" height="7" class="bl" stroke="none"/><rect x="-9" y="-3" width="18" height="7" class="bl" stroke="none"/><rect x="-5" y="5" width="10" height="8" class="bl" stroke="none"/></g>
<g transform="translate(1535 515)"><path d="M-13-13V13H14"/><rect x="-7" y="-6" width="4" height="4" fill="#1b78cc" stroke="none"/><rect x="-1" y="-1" width="4" height="4" fill="#1b78cc" stroke="none"/><rect x="6" y="-12" width="5" height="5" fill="#cfcfcf" stroke="none"/><rect x="-9" y="4" width="5" height="5" fill="#cfcfcf" stroke="none"/><rect x="7" y="2" width="5" height="5" fill="#1b78cc" stroke="none"/></g>
<g transform="translate(1577 515)"><circle r="12.500"/><path d="M0 0V-12A12 12 0 0 1 9 8Z" class="bl" stroke="none"/></g>
<g transform="translate(1619 515)"><circle r="9" stroke="#1b78cc" stroke-width="5"/><path d="M-12 0A12 12 0 0 1 0-12" stroke="#2a2a2a" stroke-width="2"/><path d="M-13 -1A13 13 0 0 1 1-13L1-5A5 5 0 0 0-5-1Z" fill="#121212" stroke="#9a9a9a" stroke-width="1.200"/></g>

<g transform="translate(1409 557)"><rect x="-13" y="-13" width="26" height="26"/><rect x="-13" y="-13" width="13" height="14" class="bl" stroke="none"/><rect x="-13" y="2" width="13" height="11" class="bl" stroke="none"/><path d="M0-5h13M6-5V13M0 4h13"/></g>
<g transform="translate(1451 557)"><circle r="8.500" fill="#123a20"/><path d="M-5-4l4-2 3 2-2 4-4 1zM2 2l5-2-1 5-3 2z" fill="#4caf50" stroke="none"/><path d="M-3-12A12 12 0 0 0-3 12" /><path d="M0 13v-1M-9 13H9"/></g>
<g transform="translate(1493 557)"><path d="M-13-11l6 1 4-2 16 2V2L6 9l-6 4-7-2-4-6-1-8z" class="gy" stroke="#cfcfcf"/><path d="M-13-11l6 1 2 1-1 5-2 5-4-2-1-4zM0 0h13V2L6 9l-5 3-3-4z" class="bl" stroke="none"/></g>
<g transform="translate(1535 557)"><path d="M-13-11l6 1 4-2 16 2V2L6 9l-6 4-7-2-4-6-1-8z" stroke="#cfcfcf"/><path d="M-4-11v9l-2 5h8l11-5M2 3v9" class="sb"/></g>
<g transform="translate(1577 557)"><path d="M2-15L13 13 0 6z" fill="#1b6fc2" stroke="none"/><path d="M2-15L-13 9 0 6z" fill="#42a5e0" stroke="none"/></g>
<g transform="translate(1619 557)"><path d="M-9-1C-4-9 6-9 10-1L6 2C3-2-2-2-5 2Z" fill="#1b6fc2" stroke="none"/><path d="M-13 9H-7M7 9H13M-13 9c0-5 2-8 4-10M13 9c0-5-2-8-4-10" stroke="#ccc"/><path d="M0 8l5-7" stroke="#eee" stroke-width="2"/></g>

<g transform="translate(1409 599)"><rect x="-13" y="-13" width="26" height="26" stroke="#aaa"/><path d="M-10 9h20" stroke="#aaa"/><text x="0" y="-1" class="m" font-size="13" style="fill:#4a90c4" stroke="none">123</text></g>
<g transform="translate(1451 599)"><rect x="-13" y="-13" width="26" height="26"/><path d="M-8-8V8"/><path d="M-5-7h13M-5-2h13M-5 3h7M-5 7h9" stroke="#4fa3d8" stroke-width="1.500"/></g>
<g transform="translate(1493 599)"><rect x="-13" y="-12" width="26" height="23"/><path d="M-8 0l5-7 5 7z" fill="#5fc080" stroke="none"/><path d="M2-7h10L7 1z" fill="#e8484e" stroke="none"/><path d="M-9 4h18"/></g>
<g transform="translate(1535 599)"><path d="M2 13H-13V-13H13V-2M-13-7H13"/><rect x="-9" y="-3" width="5" height="5" class="gy" stroke="none"/><rect x="-9" y="5" width="5" height="5" class="gy" stroke="none"/><path d="M0 0H14L9 6V14L5 12V6Z"/></g>
<g transform="translate(1577 599)"><rect x="-13" y="-13" width="26" height="26"/><path d="M-13-7H13M-13 0H13M-13 6H13M-4-7V13M5-7V13"/></g>
<g transform="translate(1619 599)"><rect x="5" y="-7" width="8" height="20" fill="#1b78cc" stroke="none"/><rect x="5" y="-13" width="8" height="6" fill="#1b78cc" stroke="none"/><rect x="-13" y="6" width="18" height="7" fill="#1b78cc" stroke="none"/><rect x="-13" y="-13" width="26" height="26"/><path d="M-13-7H13M-13 0H13M-13 6H13M-4-7V13M5-7V13"/></g>

<text x="1409" y="641" class="m b" font-size="21" style="fill:#2a80c4" stroke="none">R</text>
<text x="1451" y="640" class="m" font-size="24" style="fill:#2a80c4;stroke:#2a80c4;stroke-width:.5">Py</text>
<g transform="translate(1493 641)"><path d="M-13-13V13H14M-13-4h18M-13 3h12M-13 9h7"/><circle cx="8" cy="-6" r="3.500" fill="#2f8fd8" stroke="#2f8fd8"/><circle cx="1" cy="2" r="2" fill="#aaa"/><circle cx="-5" cy="8" r="2" fill="#aaa"/></g>
<g transform="translate(1535 641)"><rect x="-13" y="-3" width="10" height="7" fill="#2f8fd8" stroke="#2f8fd8"/><path d="M-3 0H2M2-9V9M2-9H5M2 0H5M2 9H5"/><rect x="5" y="-13" width="9" height="7" fill="#1b6fc2" stroke="#4fa3d8"/><rect x="5" y="-3" width="9" height="7" fill="#1b6fc2" stroke="#4fa3d8"/><rect x="5" y="6" width="9" height="7" fill="#1b6fc2" stroke="#4fa3d8"/></g>
<g transform="translate(1577 641)"><path d="M-13-12H13V7H-3L-7 13V7H-13Z" stroke="#7db4dc"/></g>
<g transform="translate(1619 641)"><path d="M-10 13V-13H3L10-6V13ZM3-13V-6H10"/><path d="M-4-3H5M-4 4H7" stroke="#4fa3d8"/><circle cx="-8" cy="-2" r="1.500" stroke="#4fa3d8"/></g>

<g transform="translate(1409 683)"><path d="M-7-12H7V-2C7 3 4 6 0 6S-7 3-7-2ZM-7-9H-13C-13-1-10 1-6 1M7-9H13C13-1 10 1 6 1M0 6V10M-6 12H6"/><rect x="-7" y="-13" width="14" height="4" class="bl" stroke="none"/><path d="M-7 13H7V10H-7Z" class="bl" stroke="none"/></g>
<g transform="translate(1451 683)"><path d="M-10 13V-13H4L10-7V13ZM4-13V-7H10"/><path d="M-6 9V3H-2V9ZM0 9V-1H4V9Z" fill="#ccc" stroke="none"/></g>
<g transform="translate(1493 683)"><rect x="-13" y="-11" width="26" height="23" stroke="#aaa"/><text x="1" y="1" class="m" font-size="13" style="fill:#4a90c4" stroke="none">123</text><path d="M-7-15H2L-3-6H2L-9 7-6-3H-11Z" fill="#f2a83b" stroke="none"/></g>
<g transform="translate(1535 683)"><path d="M2 13H-13V-13H13V-2M-13-7H13"/><rect x="-9" y="0" width="5" height="5" class="gy" stroke="none"/><path d="M0 0H14L9 6V14L5 12V6Z"/><path d="M-5-15H4L-1-6H4L-7 7-4-3H-9Z" fill="#f8c67a" stroke="none"/></g>
<g transform="translate(1577 683)"><path d="M-12-11H13V12H-12Z" class="sb"/><path d="M-8 4L-2-3 3 3 10-4V10H-8Z" fill="#1b6fc2" stroke="none"/><path d="M-13-14H-4V-4L-8 3-13-4Z" fill="#d4730c" stroke="none"/><circle cx="9" cy="10" r="4.500" fill="#d4730c" stroke="none"/><circle cx="12" cy="0" r="2" fill="#d4730c" stroke="none"/></g>
<g transform="translate(1619 683)" stroke="#7a3ea0" stroke-width="1.800"><path d="M-13 0L-4-10 4-2-5 8ZM-4 8L5-2 13 6 4 14ZM-4-10L4-13 13-3 5-2Z" /></g>

<g transform="translate(1409 723)" stroke="#1b78cc" stroke-width="1.800"><path d="M-13-10H-1L13 2 1 13H-13L-3 2Z"/><path d="M-5 9L7-3"/></g>
</g>
<path d="M1443 723h3M1450 723h3M1457 723h3" stroke="#ddd" stroke-width="3"/>

<path d="M1379 752.500H1649" stroke="#bdbdbd"/>
<rect x="1639.500" y="757" width="9.500" height="165" rx="4.500" fill="#666"/>
<text x="1397" y="778" class="v">Values</text>
<rect x="1386.500" y="798.500" width="253" height="41" fill="none" stroke="#666" stroke-dasharray="3 2"/>
<text x="1401" y="818" class="v">Add data fields here</text>
<text x="1397" y="868" class="v b" style="fill:#f0f0f0" textLength="104" lengthAdjust="spacingAndGlyphs">Drill through</text>
<text x="1397" y="905" class="v" textLength="99" lengthAdjust="spacingAndGlyphs">Cross-report</text>
<rect x="1568" y="893" width="48" height="24" rx="12" fill="#2ba892"/><text x="1575" y="906" font-size="12" style="fill:#17564c">On</text><circle cx="1603" cy="905" r="6" fill="#22262a"/>
<text x="1397" y="945" class="v" textLength="111" lengthAdjust="spacingAndGlyphs">Keep all filters</text>
<rect x="1568" y="933" width="48" height="24" rx="12" fill="#2ba892"/><text x="1575" y="946" font-size="12" style="fill:#17564c">On</text><circle cx="1603" cy="945" r="6" fill="#22262a"/>

<!-- data panel -->
<text x="1662" y="277" class="b" font-size="22" style="fill:#fff" textLength="49" lengthAdjust="spacingAndGlyphs">Data</text>
<path d="M1892 271l5 5-5 5" fill="none" stroke="#eee" stroke-width="2"/>
<rect x="1657.500" y="316.500" width="245" height="33" rx="5" fill="#222" stroke="#5a5a5a"/>
<circle cx="1684" cy="331" r="7.500" fill="none" stroke="#bbb" stroke-width="1.400"/><path d="M1689.500 337l6 7" stroke="#bbb" stroke-width="1.500"/>
<text x="1707" y="335.500" font-size="19" style="fill:#8a8a8a" textLength="61" lengthAdjust="spacingAndGlyphs">Search</text>

<g id="fields">
<path d="M1716 352v24h18v-24" class="cb"/>
<g class="cb"><rect x="1716.500" y="397.500" width="17.500" height="17.500" rx="3"/><rect x="1716.500" y="432.500" width="17.500" height="17.500" rx="3"/><rect x="1716.500" y="468.500" width="17.500" height="17.500" rx="3"/><rect x="1716.500" y="504.500" width="17.500" height="17.500" rx="3"/><rect x="1716.500" y="540.500" width="17.500" height="17.500" rx="3"/><rect x="1716.500" y="576.500" width="17.500" height="17.500" rx="3"/><rect x="1716.500" y="612.500" width="17.500" height="17.500" rx="3"/><rect x="1716.500" y="648.500" width="17.500" height="17.500" rx="3"/><rect x="1716.500" y="684.500" width="17.500" height="17.500" rx="3"/><rect x="1716.500" y="720.500" width="17.500" height="17.500" rx="3"/><rect x="1716.500" y="756.500" width="17.500" height="17.500" rx="3"/><rect x="1716.500" y="792.500" width="17.500" height="17.500" rx="3"/><rect x="1716.500" y="828.500" width="17.500" height="17.500" rx="3"/><rect x="1716.500" y="864.500" width="17.500" height="17.500" rx="3"/><rect x="1716.500" y="900.500" width="17.500" height="17.500" rx="3"/><rect x="1716.500" y="936.500" width="17.500" height="17.500" rx="3"/></g>
<g fill="none" stroke="#e8e8e8" stroke-width="1.300">
<path d="M1762 368h-14l7 7-7 2v1h14" transform="translate(0 -1)"/>
<path d="M1762 398h-14l7 8-7 8h14"/>
<path d="M1762 470h-14l7 8-7 8h14"/><path d="M1762 614h-14l7 8-7 8h14"/><path d="M1762 686h-14l7 8-7 8h14" transform="translate(0 35)"/><path d="M1762 757h-14l7 8-7 8h14"/><path d="M1762 793h-14l7 8-7 8h14"/><path d="M1762 937h-14l7 8-7 8h14"/>
<rect x="1747.500" y="433" width="16" height="16" rx="3"/><path d="M1748 437h15"/><path d="M1751 441h2M1755 441h2M1759 441h2M1751 445h2M1755 445h2" stroke-width="1.500"/>
<path d="M1699 435l5 6-5 6" stroke-width="1.500"/>
</g>
<text x="1773" y="370.500" class="f" textLength="90" lengthAdjust="spacingAndGlyphs">MONTH_ID</text><text x="1773" y="406.500" class="f" textLength="46" lengthAdjust="spacingAndGlyphs">MSRP</text><text x="1773" y="442" class="f" textLength="97" lengthAdjust="spacingAndGlyphs">ORDERDATE</text><text x="1773" y="478" class="f" textLength="119" lengthAdjust="spacingAndGlyphs">ORDERLINEN...</text><text x="1773" y="514" class="f">ORDERNUMB...</text><text x="1773" y="550" class="f" textLength="59" lengthAdjust="spacingAndGlyphs">PHONE</text><text x="1773" y="586" class="f" textLength="106" lengthAdjust="spacingAndGlyphs">POSTALCODE</text><text x="1773" y="622" class="f" textLength="89" lengthAdjust="spacingAndGlyphs">PRICEEACH</text><text x="1773" y="658" class="f">PRODUCTCODE</text><text x="1773" y="694" class="f" textLength="115" lengthAdjust="spacingAndGlyphs">PRODUCTLINE</text><text x="1773" y="730" class="f" textLength="58" lengthAdjust="spacingAndGlyphs">QTR_ID</text><text x="1773" y="766" class="f" textLength="121" lengthAdjust="spacingAndGlyphs">QUANTITYOR...</text><text x="1773" y="802" class="f" textLength="48" lengthAdjust="spacingAndGlyphs">SALES</text><text x="1773" y="838" class="f" textLength="46" lengthAdjust="spacingAndGlyphs">STATE</text><text x="1773" y="874" class="f" textLength="59" lengthAdjust="spacingAndGlyphs">STATUS</text><text x="1773" y="910" class="f" textLength="87" lengthAdjust="spacingAndGlyphs">TERRITORY</text><text x="1773" y="946" class="f" textLength="66" lengthAdjust="spacingAndGlyphs">YEAR_ID</text>
</g>

<!-- status bar -->
<rect x="0" y="977" width="1895" height="35" fill="#121212"/>
<path d="M0 976.500H1895" stroke="#6a6a6a"/>
<text x="6" y="996" font-size="17" style="fill:#cfcfcf" textLength="88" lengthAdjust="spacingAndGlyphs">Page 1 of 1</text>
<path d="M1315 996h6" stroke="#ccc" stroke-width="1.600"/><path d="M1328 994.500H1477" stroke="#bbb" stroke-width="1.200"/><rect x="1368" y="986" width="6" height="17" fill="#ccc"/><path d="M1403 990v9" stroke="#bbb"/>
<path d="M1487 995h11M1492.500 989.500v11" stroke="#ddd" stroke-width="1.800"/>
<text x="1518" y="995" font-size="17" style="fill:#cfcfcf" textLength="35" lengthAdjust="spacingAndGlyphs">61%</text>
<rect x="1583.500" y="986.500" width="20" height="17" rx="3" fill="#2a2a2a" stroke="#bbb"/><path d="M1590 991h-2v2M1597 991h2v2M1590 999h-2v-2M1597 999h2v-2" fill="none" stroke="#ddd"/>
<text x="1626" y="996" font-size="17.500" style="fill:#bdbdbd">Update available (click to download)</text>

<!-- taskbar -->
<rect x="0" y="1012" width="1895" height="49" fill="#1c2b3a"/>
<rect x="0" y="1012" width="72" height="49" fill="#2d3322"/>
<path d="M24 1034l10-1.500V1041H24zM36 1032l13-2V1041H36zM24 1043h10v9l-10-1.500zM36 1043h13v11l-13-2z" fill="#f2f2f2"/>
<rect x="73" y="1013" width="431" height="48" fill="#efefef"/><path d="M73 1014h431" stroke="#bbb" stroke-width="2"/>
<circle cx="106" cy="1037" r="8.500" fill="none" stroke="#222" stroke-width="1.600"/><path d="M100 1044l-8 9" stroke="#222" stroke-width="1.800"/>
<text x="132" y="1045" font-size="20" style="fill:#2a2a2a" textLength="197" lengthAdjust="spacingAndGlyphs">Type here to search</text>
<ellipse cx="445" cy="1060" rx="46" ry="5" fill="#8fc4de"/>
<path d="M436 1033c5-7 15-6 22 0 6 5 11 14 7 20-7 4-19 2-24-6-3-5-5-9-5-14z" fill="#a88a6e"/>
<path d="M430 1020c2-5 9-6 11-1 2 4 1 9-3 16l-4-2c1-4 1-8-1-9z" fill="#d0b88c"/>
<path d="M430 1020l-11 28c5-5 12-16 15-24z" fill="#d07838"/>
<path d="M450 1052v8M456 1052v8" stroke="#333" stroke-width="1.500"/>
<path d="M528 1028h23M528 1059h23M532 1036h14v13h-14zM550 1041h2v3h-2z" fill="none" stroke="#e4e4e4" stroke-width="1.200"/>
<path d="M606 1030h13c6 0 10 5 9 11l-3 10h-17c-6 0-9-5-8-11l2-4c1-4 2-6 4-6z" fill="url(#cop2)"/><path d="M613 1040h13c5 0 8 4 6 9l-1 4c-2 4-4 7-8 7h-12c-4 0-6-4-4-8z" fill="url(#cop)"/>
<circle cx="692" cy="1042" r="18" fill="url(#edge)"/><path d="M676 1050c2-14 18-20 27-11 3 3 3 7 1 9h-12c-4 5 0 11 7 11-12 4-22-2-23-9z" fill="#12213a" opacity=".65"/>
<path d="M751 1028h12l3 4h17v28h-32z" fill="#f2c04a"/><rect x="751" y="1034" width="32" height="26" fill="#f7d46e"/><path d="M760 1060v-9l7-6 7 6v9z" fill="#2b8ed8"/>
<path d="M824 1034h35v26a2 2 0 0 1-2 2h-31a2 2 0 0 1-2-2z" fill="#f4f4f4"/><path d="M834 1034c0-9 15-9 15 0" fill="none" stroke="#38a8d8" stroke-width="2"/>
<rect x="831" y="1040" width="8" height="8" fill="#e8482c"/><rect x="841" y="1040" width="8" height="8" fill="#7cba3a"/><rect x="831" y="1050" width="8" height="8" fill="#2a9ee8"/><rect x="841" y="1050" width="8" height="8" fill="#f2b81a"/>
<path d="M900 1040l18-13 18 13v21h-36z" fill="#1a7fd4"/><path d="M900 1040l18 12 18-12" fill="#4fb0ee"/>
<rect x="1031" y="1013" width="73" height="48" fill="#36434f"/>
<circle cx="992" cy="1044" r="18" fill="#d93a2e"/><path d="M992 1026a18 18 0 0 1 16 10h-16z" fill="#e8483a"/><path d="M977 1034l9 16 7 11a18 18 0 0 1-16-27z" fill="#3aa44a"/><path d="M1008 1036a18 18 0 0 1-15 25l9-15z" fill="#f5c22a"/><circle cx="992" cy="1044" r="8" fill="#4a90e2" stroke="#eee" stroke-width="2"/>
<rect x="1054" y="1042" width="10" height="19" fill="#f2c84a"/><rect x="1063" y="1033" width="9" height="28" fill="#e8ad26"/><rect x="1071" y="1024" width="10" height="37" fill="#d89a16"/>

<!-- watermark -->
<text x="947" y="978" class="m b" font-size="68" style="fill:#b8b8b8;stroke:#b8b8b8;stroke-width:2.500;font-family:'DejaVu Sans',sans-serif" textLength="215" lengthAdjust="spacingAndGlyphs">نفذلي</text>
<text x="952" y="1043" class="m b" font-size="36" style="fill:#cfd3d6;opacity:.85" textLength="188" lengthAdjust="spacingAndGlyphs">nafezly.com</text>

<!-- tray -->
<circle cx="1372" cy="1043" r="15" fill="#f08c1c"/><path d="M1366 1053c-4-6 2-10 7-8 4-3 11 0 9 5 3 2 1 6-3 6h-11z" fill="#d6e4f2"/>
<circle cx="1379" cy="1033" r="9" fill="#d0342c"/><text x="1379" y="1033" class="m b" font-size="11" style="fill:#fff">1</text>
<text x="1402" y="1043" font-size="20" style="fill:#ececec" textLength="42" lengthAdjust="spacingAndGlyphs">20°C</text>
<path d="M1483 1048l9-10 9 10" fill="none" stroke="#ddd" stroke-width="1.400"/>
<path d="M1523 1034h9v18h-9zM1532 1040l5-3v12l-5-3M1522 1031c4-4 8-4 12 0M1522 1055c4 4 8 4 12 0" fill="none" stroke="#ccc" stroke-width="1.300"/>
<path d="M1554 1051c-4-6 1-12 7-10 3-5 10-3 10 2 4 1 4 8-1 8z" fill="#aeb6bd"/><circle cx="1569" cy="1051" r="7" fill="#2b8ed8" stroke="#eee"/>
<rect x="1589" y="1036" width="20" height="16" fill="none" stroke="#ddd" stroke-width="1.300"/><rect x="1591" y="1038" width="6" height="12" fill="#eee"/><circle cx="1606" cy="1051" r="6.500" fill="#12a03c"/>
<path d="M1628 1054c0-10 6-17 14-19M1633 1054c0-7 4-12 9-13M1638 1054c0-3 2-6 4-7" fill="none" stroke="#ccc" stroke-width="1.300"/><circle cx="1643" cy="1053" r="1.500" fill="#ddd"/>
<path d="M1662 1039h4l6-6v20l-6-6h-4zM1675 1040l7 7M1682 1040l-7 7" fill="none" stroke="#ccc" stroke-width="1.300"/>
<text x="1700" y="1043" font-size="17" style="fill:#e4e4e4" textLength="34" lengthAdjust="spacingAndGlyphs">ENG</text>
<text x="1762" y="1029" font-size="16.500" style="fill:#e4e4e4" textLength="44" lengthAdjust="spacingAndGlyphs">02:27</text>
<text x="1815" y="1030" font-size="15" class="m" style="fill:#e4e4e4;font-family:'DejaVu Sans',sans-serif">م</text>
<text x="1755" y="1054" font-size="15" style="fill:#e4e4e4;font-family:'DejaVu Sans',sans-serif;direction:ltr;unicode-bidi:bidi-override" textLength="76" lengthAdjust="spacingAndGlyphs">٢٠٢٥/٠١/١٧</text>
<path d="M1859 1030h24v19h-8l-4 5-4-5h-8z" fill="#f0f0f0"/><path d="M1864 1036h14M1864 1040h14M1864 1044h14" stroke="#333"/>
<circle cx="1884" cy="1050" r="11" fill="#1c2b3a" stroke="#aaa"/><text x="1884" y="1050" class="m" font-size="13" style="fill:#eee;font-family:'DejaVu Sans',sans-serif">٣</text>
</svg>
</body></html>
